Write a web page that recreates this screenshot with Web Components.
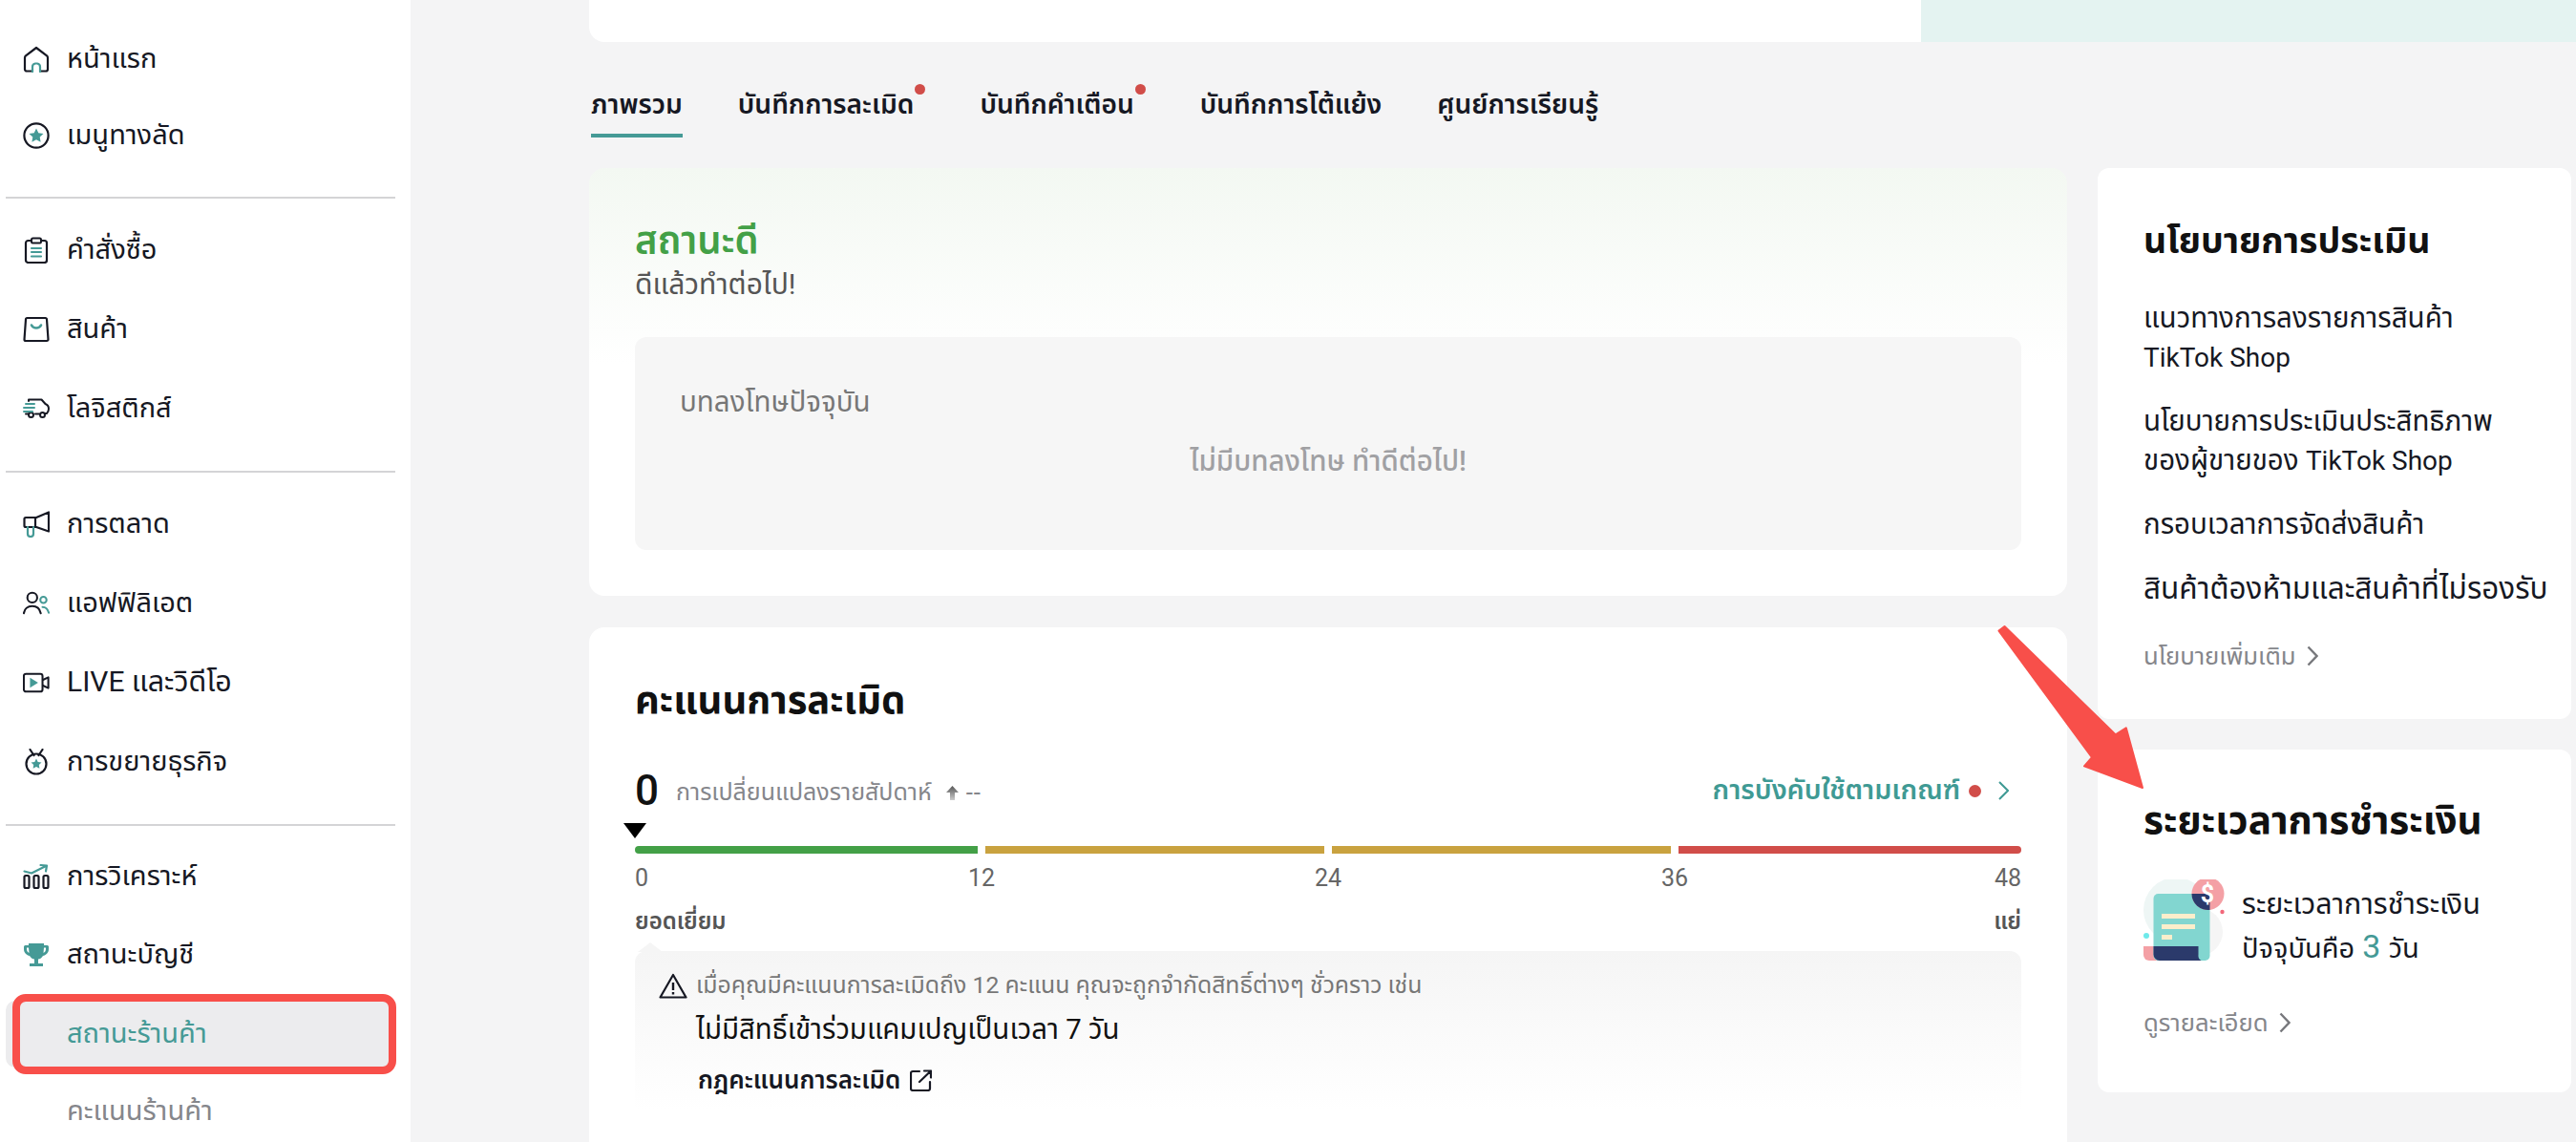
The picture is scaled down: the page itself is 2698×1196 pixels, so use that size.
<!DOCTYPE html>
<html lang="th"><head><meta charset="utf-8"><title>สถานะร้านค้า</title>
<style>
html,body{margin:0;height:1196px;overflow:hidden;background:#f4f4f5;font-family:Roboto,"Noto Sans","Noto Sans Thai",sans-serif;color:#161823}
</style></head><body>
<x-app>
  <x-sidebar slot="side">
    <x-nav h="80"><svg slot="icon" viewBox="0 0 28 28" width="28" height="28" fill="none" stroke-width="2.2" stroke-linecap="round" stroke-linejoin="round"><path stroke="#161823" d="M9 26.5H4a2 2 0 0 1-2-2V12.500a3 3 0 0 1 1-2.200L14 2l11 8.300a3 3 0 0 1 1 2.200v12a2 2 0 0 1-2 2h-5"/><path stroke="#459a96" d="M10 27v-5a3.500 3.500 0 0 1 3-3.500h2a3.500 3.500 0 0 1 3 3.500v5"/></svg>หน้าแรก</x-nav>
    <x-nav h="80"><svg slot="icon" viewBox="0 0 28 28" width="28" height="28" fill="none"><circle cx="14" cy="14" r="12.600" stroke="#161823" stroke-width="2.200"/><path fill="#459a96" d="M14 6.500l2.300 4.700 5.200.7-3.800 3.600.9 5.200-4.600-2.500-4.600 2.500.9-5.200-3.800-3.600 5.200-.7z"/></svg>เมนูทางลัด</x-nav>
    <x-divider></x-divider>
    <x-nav h="83"><svg slot="icon" viewBox="0 0 28 28" width="28" height="28" fill="none" stroke-width="2.200" stroke-linejoin="round"><rect x="3" y="4" width="22" height="23" rx="2.500" stroke="#161823"/><rect x="9" y="1.500" width="10" height="5" rx="1.500" fill="#fff" stroke="#161823" stroke-width="2"/><path stroke="#459a96" stroke-linecap="round" d="M9 12h10M9 16h10M9 20.500h10"/></svg>คำสั่งซื้อ</x-nav>
    <x-nav h="83"><svg slot="icon" viewBox="0 0 28 28" width="28" height="28" fill="none" stroke-width="2.200" stroke-linejoin="round" stroke-linecap="round"><path stroke="#161823" d="M4.500 2h19a1.500 1.500 0 0 1 1.500 1.500l1.500 21a1.500 1.500 0 0 1-1.500 1.500H3a1.500 1.500 0 0 1-1.500-1.500L3 3.500A1.500 1.500 0 0 1 4.500 2z"/><path stroke="#459a96" stroke-width="2.600" d="M9 9.500c2 4 8 4 10 0"/></svg>สินค้า</x-nav>
    <x-nav h="83"><svg slot="icon" viewBox="0 0 28 28" width="28" height="28" fill="none" stroke-width="2" stroke-linecap="round" stroke-linejoin="round"><path stroke="#161823" d="M6 6V4.500h13.500l4 4.500c2 .7 3.500 2.500 3.500 5 0 2-.8 4-2 5h-2M13 19.500h4"/><circle cx="8.500" cy="20.500" r="2.500" stroke="#161823"/><circle cx="20.500" cy="20.500" r="2.500" stroke="#161823"/><path stroke="#161823" d="M3 19.500h2.500"/><path stroke="#459a96" d="M3 9h9M1 13h11M1 17h9"/></svg>โลจิสติกส์</x-nav>
    <x-divider></x-divider>
    <x-nav h="83"><svg slot="icon" viewBox="0 0 28 28" width="28" height="28" fill="none" stroke-width="2.200" stroke-linejoin="round" stroke-linecap="round"><path stroke="#161823" d="M27 1.500v20L14 17H3a1.500 1.500 0 0 1-1.500-1.500v-7A1.500 1.500 0 0 1 3 7h11zM13 7v10"/><path stroke="#459a96" d="M5 17v7a3 3 0 0 0 6 0v-7"/></svg>การตลาด</x-nav>
    <x-nav h="83"><svg slot="icon" viewBox="0 0 30 28" width="30" height="28" fill="none" stroke-width="2.200" stroke-linecap="round"><circle cx="10.500" cy="7.500" r="5.500" stroke="#161823"/><path stroke="#161823" d="M1 25c.6-5 4.500-8 9.500-8s8.500 3 9.500 8"/><circle cx="23" cy="10" r="3.500" stroke="#459a96"/><path stroke="#459a96" d="M22 18c3.500 0 6 2.500 7 6.500"/></svg>แอฟฟิลิเอต</x-nav>
    <x-nav h="83"><svg slot="icon" viewBox="0 0 30 28" width="30" height="28" fill="none" stroke-width="2.200" stroke-linejoin="round"><rect x="1" y="4" width="21" height="20" rx="2.500" stroke="#161823"/><path stroke="#161823" d="M22 11l6.500-3v12L22 17"/><path fill="#459a96" d="M8 8.500L17 14l-9 5.500z"/></svg><span style="font-size:30px">LIVE</span>&nbsp;<span style="font-size:30.500px">และวิดีโอ</span></x-nav>
    <x-nav h="83"><svg slot="icon" viewBox="0 0 28 28" width="28" height="28" fill="none" stroke-width="2.200" stroke-linecap="round"><circle cx="14" cy="16" r="10.500" stroke="#161823"/><path stroke="#161823" d="M7.500 1l4 6M20.500 1l-4 6"/><path fill="#459a96" d="M14 10.500l1.700 3.400 3.800.5-2.700 2.600.6 3.800-3.400-1.800-3.400 1.800.6-3.800-2.700-2.600 3.800-.5z"/></svg>การขยายธุรกิจ</x-nav>
    <x-divider></x-divider>
    <x-nav h="82"><svg slot="icon" viewBox="0 0 28 28" width="28" height="28" fill="none" stroke-width="2.200" stroke-linejoin="round" stroke-linecap="round"><rect x="1.500" y="13" width="5" height="13" rx="1.500" stroke="#161823"/><rect x="11.500" y="13" width="5" height="13" rx="1.500" stroke="#161823"/><rect x="21.500" y="13" width="5" height="13" rx="1.500" stroke="#161823"/><path stroke="#459a96" d="M1.500 8.500l7.500 2 15-7.500M18.500 2l6.500 .5-1 6"/></svg>การวิเคราะห์</x-nav>
    <x-nav h="82"><svg slot="icon" viewBox="0 0 28 28" width="28" height="28"><path fill="#459a96" d="M6 2h16v2h3.500A1.500 1.500 0 0 1 27 5.500V8c0 4-3 6.500-6 7-1 2-3 3.200-5 3.600V23h5v3H7v-3h5v-4.400c-2-.4-4-1.600-5-3.600-3-.5-6-3-6-7V5.500A1.500 1.500 0 0 1 2.500 4H6zM4 6.500V8c0 1.800 1 3.300 2.500 4L6 6.500zM24 6.500h-2L21.500 12c1.500-.7 2.500-2.200 2.500-4z"/></svg>สถานะบัญชี</x-nav>
    <x-nav h="70" active>สถานะร้านค้า<x-redbox slot="over"></x-redbox></x-nav>
    <x-nav h="78" muted>คะแนนร้านค้า</x-nav>
  </x-sidebar>

  <x-topstrip slot="top"></x-topstrip>
  <x-tabs slot="tabs">
    <x-tab active>ภาพรวม</x-tab>
    <x-tab dot>บันทึกการละเมิด</x-tab>
    <x-tab dot>บันทึกคำเตือน</x-tab>
    <x-tab>บันทึกการโต้แย้ง</x-tab>
    <x-tab>ศูนย์การเรียนรู้</x-tab>
  </x-tabs>

  <x-status-card slot="left"></x-status-card>
  <x-score-card slot="left"></x-score-card>

  <x-side-card slot="right" heading="นโยบายการประเมิน">
    <x-policy-links></x-policy-links>
    <x-more slot="more" style="margin-top:32px">นโยบายเพิ่มเติม</x-more>
  </x-side-card>
  <x-side-card slot="right" heading="ระยะเวลาการชำระเงิน" style="margin-top:32px" h2>
    <x-payment></x-payment>
    <x-more slot="more" style="margin-top:47px">ดูรายละเอียด</x-more>
  </x-side-card>

  <x-arrow slot="overlay"></x-arrow>
</x-app>

<template id="t-app"><style>
:host{display:grid;grid-template-columns:430px 1fr;height:1196px;overflow:hidden;position:relative;font-family:Roboto,"Noto Sans","Noto Sans Thai",sans-serif}
.main{padding-left:187px;min-width:0}
.cols{display:grid;grid-template-columns:1548px 496px;column-gap:32px;margin-top:36px}
.l{display:flex;flex-direction:column;gap:33px}
.r{display:flex;flex-direction:column}
</style>
<slot name="side"></slot>
<div class="main"><slot name="top"></slot><slot name="tabs"></slot>
<div class="cols"><div class="l"><slot name="left"></slot></div><div class="r"><slot name="right"></slot></div></div></div>
<slot name="overlay"></slot></template>

<template id="t-sidebar"><style>
:host{display:block;background:#fff;padding:22px 16px 0 6px;height:1196px;box-sizing:border-box;overflow:hidden}
</style><slot></slot></template>

<template id="t-nav"><style>
:host{display:flex;align-items:center;position:relative;font-size:29px;color:#161823;box-sizing:border-box;padding-left:18px;white-space:nowrap}
.i{width:28px;height:28px;display:flex;margin-right:18px;flex:none}
:host([active]){color:#459a96;background:#ececee;border-radius:10px;margin:7px 0 7px}
:host([muted]){color:#85868b}
:host([active]) .i,:host([muted]) .i{visibility:hidden}
</style><span class="i"><slot name="icon"></slot></span><span><slot></slot></span><slot name="over"></slot></template>

<template id="t-divider"><style>:host{display:block;height:2px;background:#d4d4d6;margin:24px 0 12px}</style></template>
<template id="t-redbox"><style>:host{position:absolute;left:7px;right:-1px;top:-7px;bottom:-7px;border:8px solid #f84f4a;border-radius:14px;box-sizing:border-box;pointer-events:none}</style></template>

<template id="t-topstrip"><style>
:host{display:grid;grid-template-columns:1395px 1fr;height:44px}
.a{background:#fff;border-bottom-left-radius:16px}.b{background:#e4f3f1}
</style><div class="a"></div><div class="b"></div></template>

<template id="t-tabs"><style>:host{display:flex;margin:46px 0 0 2px;gap:58px}</style><slot></slot></template>
<template id="t-tab"><style>
:host{display:block;position:relative;font-size:28.100px;font-weight:600;line-height:40px;padding-bottom:10px;color:#161823;white-space:nowrap}
:host([dot]){margin-right:11px}
:host([dot])::after{content:"";position:absolute;width:11px;height:11px;border-radius:50%;background:#d14d49;right:-12px;top:-2px}
:host([active])::before{content:"";position:absolute;left:0;right:0;bottom:-4px;height:4px;background:#459a96}
</style><slot></slot></template>

<template id="t-status"><style>
:host{display:block;background:linear-gradient(#f3f8f2,#fff 46%);border-radius:16px;padding:52px 48px 48px;}
h2{margin:0;font-size:40px;line-height:50px;font-weight:600;color:#43a047}
p{margin:0 0 35px;font-size:30px;line-height:40px;color:#555}
.box{background:#f6f6f6;border-radius:12px;height:223px;box-sizing:border-box;padding:50px 47px 0}
.t{font-size:29.500px;line-height:36px;color:#777}
.e{font-size:29.500px;line-height:36px;color:#a0a0a3;font-weight:500;text-align:center;margin-top:26px}
</style><h2>สถานะดี</h2><p>ดีแล้วทำต่อไป!</p>
<div class="box"><div class="t">บทลงโทษปัจจุบัน</div><div class="e">ไม่มีบทลงโทษ ทำดีต่อไป!</div></div></template>

<template id="t-score"><style>
:host{display:block;background:#fff;border-radius:16px;padding:49px 48px 60px}
h2{margin:0 0 38px;font-size:40px;line-height:56px;font-weight:700;color:#111}
.row{display:flex;align-items:center;height:56px}
.n{font-size:44px;font-weight:500;color:#111;margin-right:18px}
.w{font-size:25px;color:#85868b;margin-top:4px}
.up{margin:4px 8px 0 15px}
.d{font-size:26px;letter-spacing:1px;color:#85868b;margin-top:4px}
.lnk{margin-left:auto;display:flex;align-items:center;color:#3f9a94;font-size:28.600px;font-weight:600;margin-right:13px}
.rd{width:13px;height:13px;border-radius:50%;background:#d14d49;margin:0 18px 0 9px}
.tri{width:0;height:0;border:12px solid transparent;border-top:16px solid #000;border-bottom:0;margin:6px 0 8px -12px}
.bar{display:grid;grid-template-columns:359px 355px 355px 359px;gap:8px;height:8px}
.bar i{display:block}
.nums{display:flex;justify-content:space-between;font-size:25px;line-height:30px;color:#666;margin-top:11px}
.nums span{width:0;display:flex;justify-content:center;white-space:nowrap}
.nums span:first-child{justify-content:flex-start}
.nums span:last-child{justify-content:flex-end}
.gr{display:flex;justify-content:space-between;font-size:24px;line-height:32px;font-weight:600;color:#555;margin-top:14px}
.note{position:relative;margin-top:15px;background:linear-gradient(#f5f5f5,#fff 92%);border-radius:12px 12px 0 0;padding:18px 25px 30px}
.note::before{content:"";position:absolute;left:3px;top:-9px;border:13px solid transparent;border-top:0;border-bottom:10px solid #f5f5f5}
.a{display:flex;align-items:center;font-size:24.800px;line-height:36px;color:#777}
.a svg{margin-right:9px;flex:none}
.b{font-size:29.400px;line-height:40px;color:#111;margin:8px 0 0 39px}
.c{display:flex;align-items:center;font-size:26px;line-height:34px;font-weight:600;color:#161823;margin:16px 0 0 41px}
.c svg{margin-left:10px}
</style>
<h2>คะแนนการละเมิด</h2>
<div class="row"><span class="n">0</span><span class="w">การเปลี่ยนแปลงรายสัปดาห์</span>
<svg class="up" width="13" height="15" viewBox="0 0 13 15"><defs><linearGradient id="g" x1="0" y1="0" x2="0" y2="1"><stop offset="0" stop-color="#555"/><stop offset="1" stop-color="#ccc"/></linearGradient></defs><path fill="url(#g)" d="M6.500 0L13 7H9v8H4V7H0z"/></svg><span class="d">--</span>
<span class="lnk">การบังคับใช้ตามเกณฑ์<span class="rd"></span><svg width="11" height="20" viewBox="0 0 11 20" fill="none" stroke="#3f9a94" stroke-width="2"><path d="M1 1l9 9-9 9"/></svg></span></div>
<div class="tri"></div>
<div class="bar"><i style="background:#43a047;border-radius:4px 0 0 4px"></i><i style="background:#c9a23f"></i><i style="background:#c9a23f"></i><i style="background:#d14d49;border-radius:0 4px 4px 0"></i></div>
<div class="nums"><span>0</span><span>12</span><span>24</span><span>36</span><span>48</span></div>
<div class="gr"><span>ยอดเยี่ยม</span><span>แย่</span></div>
<div class="note">
<div class="a"><svg width="30" height="27" viewBox="0 0 30 27" fill="none" stroke="#161823" stroke-width="2.200" stroke-linejoin="round"><path d="M15 2L28.500 25.500h-27z"/><path d="M15 10v8M15 20v2.500" stroke-width="2.400"/></svg>เมื่อคุณมีคะแนนการละเมิดถึง 12 คะแนน คุณจะถูกจำกัดสิทธิ์ต่างๆ ชั่วคราว เช่น</div>
<div class="b">ไม่มีสิทธิ์เข้าร่วมแคมเปญเป็นเวลา 7 วัน</div>
<div class="c">กฎคะแนนการละเมิด<svg width="23" height="23" viewBox="0 0 23 23" fill="none" stroke="#161823" stroke-width="2.200" stroke-linecap="round" stroke-linejoin="round"><path d="M10 2H3a2 2 0 0 0-2 2v16a2 2 0 0 0 2 2h16a2 2 0 0 0 2-2v-7M10 13L22 1.500M15 1.500h7v7"/></svg></div>
</div></template>

<template id="t-side"><style>
:host{display:block;background:#fff;border-radius:12px;padding:50px 48px 48px}
:host([h2]){padding-top:48px;padding-bottom:55px}
h3{margin:0 0 35px;font-size:37.500px;line-height:52px;font-weight:700;color:#111;white-space:nowrap}
:host([h2]) h3{margin-bottom:36px;font-size:40.500px}
</style><h3></h3><slot></slot><slot name="more"></slot></template>

<template id="t-links"><style>
:host{display:block;font-size:29.500px;line-height:41px;color:#161823}
div{margin-top:26px}div:first-child{margin-top:0}
span{font-size:28px}
</style><div>แนวทางการลงรายการสินค้า<br><span>TikTok Shop</span></div><div>นโยบายการประเมินประสิทธิภาพ<br>ของผู้ขายของ <span>TikTok Shop</span></div><div>กรอบเวลาการจัดส่งสินค้า</div><div style="white-space:nowrap;font-size:31.500px">สินค้าต้องห้ามและสินค้าที่ไม่รองรับ</div></template>

<template id="t-more"><style>
:host{display:flex;align-items:center;font-size:25.700px;line-height:36px;color:#85868b}
svg{margin-left:11px}
</style><slot></slot><svg width="12" height="22" viewBox="0 0 12 22" fill="none" stroke="#77787c" stroke-width="2.400"><path d="M1.500 1.500L10.500 11l-9 9.500"/></svg></template>

<template id="t-pay"><style>
:host{display:flex;align-items:flex-start;height:85px}
svg{flex:none;margin-right:18px}
.t{font-size:30.500px;line-height:45px;color:#161823;margin-top:3px;white-space:nowrap}
.l2{font-size:29px}
b{font-weight:400;font-size:34px;color:#459a96;margin:0 1px}
</style>
<svg width="85" height="85" viewBox="0 0 85 85"><circle cx="34" cy="32" r="34" fill="#eef6f5"/><circle cx="58" cy="55" r="25" fill="#f5f5f5"/><path fill="#f4a0a5" d="M0 70h30v15H6a6 6 0 0 1-6-6z"/><rect x="10.500" y="15" width="59" height="70" rx="5" fill="#82d6d0"/><path fill="#2b3a6b" d="M10.500 70h47v9a6 6 0 0 0 3 6H17a6.500 6.500 0 0 1-6.500-6.500z"/><rect x="19" y="36" width="35" height="5" fill="#fbeecb"/><rect x="19" y="47" width="35" height="5" fill="#fbeecb"/><rect x="19" y="58" width="11" height="5" fill="#fbeecb"/><circle cx="67.500" cy="15" r="17" fill="#f4a0a5"/><path fill="#2b3a6b" d="M69.500 15v16.900a17 17 0 0 1-19-16.900z"/><text x="67" y="24" font-family="Roboto,sans-serif" font-size="25" font-weight="700" fill="#fff" text-anchor="middle">$</text><circle cx="3" cy="59" r="3" fill="#6ee9ea"/><circle cx="82.500" cy="34" r="2.200" fill="#f2677a"/></svg>
<div class="t">ระยะเวลาการชำระเงิน<br><span class="l2">ปัจจุบันคือ <b>3</b> วัน</span></div></template>

<template id="t-arrow"><style>:host{position:absolute;left:0;top:0;pointer-events:none}svg{display:block}</style>
<svg width="2698" height="1196" viewBox="0 0 2698 1196"><path fill="#f84f4a" stroke="#f84f4a" stroke-width="2" stroke-linejoin="round" d="M2099.500 656L2215.800 769.400L2226.800 762.300L2244 825L2183 802.400L2191 793.200L2093.500 660.600z"/></svg></template>

<script>
function def(name,tpl,extra){
  customElements.define(name,class extends HTMLElement{
    constructor(){super();const r=this.attachShadow({mode:'open'});r.appendChild(document.getElementById(tpl).content.cloneNode(true));}
    connectedCallback(){if(extra)extra(this);}
  });
}
def('x-app','t-app');def('x-sidebar','t-sidebar');
def('x-nav','t-nav',e=>{e.style.height=(e.getAttribute('h')||82)+'px'});
def('x-divider','t-divider');def('x-redbox','t-redbox');def('x-topstrip','t-topstrip');
def('x-tabs','t-tabs');def('x-tab','t-tab');def('x-status-card','t-status');def('x-score-card','t-score');
def('x-side-card','t-side',e=>{e.shadowRoot.querySelector('h3').textContent=e.getAttribute('heading')});
def('x-policy-links','t-links');def('x-more','t-more');def('x-payment','t-pay');def('x-arrow','t-arrow');
</script>
</body></html>
